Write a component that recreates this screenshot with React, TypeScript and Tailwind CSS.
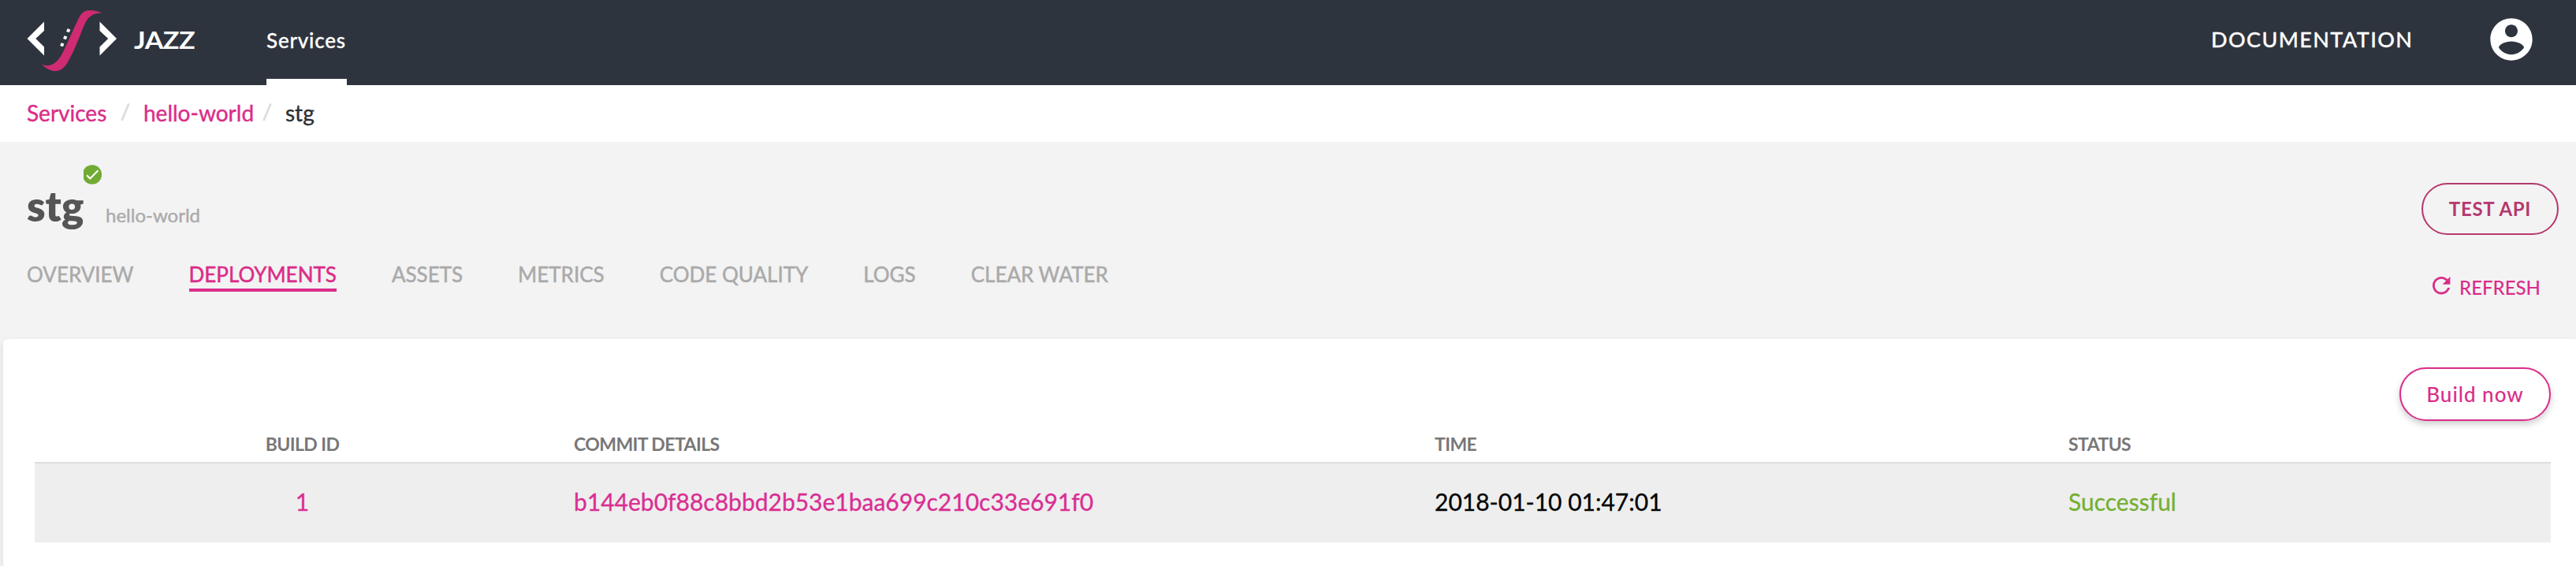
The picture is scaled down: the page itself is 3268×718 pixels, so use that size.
const tabs = ["OVERVIEW", "DEPLOYMENTS", "ASSETS", "METRICS", "CODE QUALITY", "LOGS", "CLEAR WATER"];

const columns = "grid grid-cols-[679px_1092px_804px_1fr]";

function Logo() {
  return (
    <svg className="block h-[84px] w-[116px]" viewBox="0 0 116 84">
      <path d="M22 20.5V32L11.3 42 22 52.5V63.5L.5 42z" fill="#fff" />
      <path d="M92.5 20.5V32L103.200 42 92.500 52.500V63.500L114 42z" fill="#fff" />
      <path
        d="M18.500 74.500C26 78 37 77.500 46 59C52.500 46 58 32 65 18C69.500 7 77 2 95.500 9.500C85 9.500 78.500 13 74 22.500C67 38 62 54 54.500 67C47 83 36 90 18.500 74.500z"
        fill="#cf2a72"
      />
      <path d="M51.500 29.300l3.800 1.300-1.400 3.700-3.800-1.300zM47.500 38.300l3.800 1.300-1.400 3.700-3.800-1.300zM43.600 47.200l3.800 1.300-1.400 3.700-3.800-1.300z" fill="#fff" />
    </svg>
  );
}

function Header() {
  return (
    <header className="flex h-[108px] items-start bg-[#2e343e] text-white">
      <div className="pl-[34px] pt-[7px]">
        <Logo />
      </div>
      <div className="ml-5 mt-[32px] w-[168px] origin-left scale-x-110 text-[31px] font-bold leading-9 tracking-[-0.5px]">JAZZ</div>
      <nav className="flex h-full w-[102px] flex-col border-b-8 border-white pt-[35px] [-webkit-text-stroke:0.3px]">
        <span className="whitespace-nowrap text-[26px] font-medium leading-8 tracking-[0.8px]">Services</span>
      </nav>
      <div className="ml-auto mt-[34px] w-[349px] text-[27px] font-medium leading-8 tracking-[1.4px] [-webkit-text-stroke:0.3px]">DOCUMENTATION</div>
      <svg className="mr-[50px] mt-[18px] size-16" viewBox="0 0 24 24" fill="#fff">
        <path d="M12 2C6.480 2 2 6.480 2 12s4.480 10 10 10 10-4.480 10-10S17.520 2 12 2zm0 3c1.660 0 3 1.340 3 3s-1.340 3-3 3-3-1.340-3-3 1.340-3 3-3zm0 14.200c-2.500 0-4.710-1.280-6-3.220.030-1.990 4-3.080 6-3.080 1.990 0 5.970 1.090 6 3.080-1.290 1.940-3.500 3.220-6 3.220z" />
      </svg>
    </header>
  );
}

function Slash() {
  return (
    <svg className="mt-[23px] h-[23px] w-3 shrink-0" viewBox="0 0 12 23">
      <path d="M10.500 0.500L1.500 22" stroke="#ddd" strokeWidth="2.800" />
    </svg>
  );
}

function Breadcrumbs() {
  return (
    <div className="flex h-[72px] items-start bg-white pl-[34px] text-[28px] leading-[70px] text-[#da2d89] [-webkit-text-stroke:0.4px]">
      <span className="w-[119px]">Services</span>
      <Slash />
      <span className="ml-[17px] w-[151px]">hello-world</span>
      <Slash />
      <span className="ml-[17px] text-[#2c2f33]">stg</span>
    </div>
  );
}

function PageHead() {
  return (
    <section className="flex h-[250px] justify-between bg-[#f3f3f3]">
      <div className="pl-[34px]">
        <div className="flex h-[136px] items-start">
          <h1 className="mt-[45px] w-[72px] text-[53px] font-extrabold leading-[72px] text-[#555]">stg</h1>
          <svg className="mt-[29px] h-[25px] w-[23px]" viewBox="0 0 23 25">
            <circle cx="10.900" cy="12.500" r="12.200" fill="#71ab33" />
            <path d="M4 13.200l4.300 4.300L18.500 7.300" fill="none" stroke="#fff" strokeWidth="2" />
          </svg>
          <span className="ml-[5px] mt-[77px] text-[24px] leading-8 text-[#aaa] [-webkit-text-stroke:0.4px]">hello-world</span>
        </div>
        <nav className="flex gap-[70px] text-[26px] text-[#aaa] [-webkit-text-stroke:0.5px]">
          {tabs.map((t) => (
            <span
              key={t}
              className={
                t === "DEPLOYMENTS"
                  ? "h-[54px] whitespace-nowrap border-b-4 border-[#da2d89] pt-[16px] leading-[32px] text-[#da2d89]"
                  : "h-[54px] whitespace-nowrap pt-[16px] leading-[32px]"
              }
            >
              {t}
            </span>
          ))}
        </nav>
      </div>
      <div className="mr-[22px] mt-[52px] flex flex-col items-end">
        <button className="h-[66px] w-[174px] rounded-full border-2 border-[#b5386e] text-[24px] font-bold tracking-[0.7px] text-[#b5386e]">
          TEST API
        </button>
        <div className="mr-[23px] mt-[50px] flex h-[32px] w-[137px] text-[24px] leading-[34px] text-[#da2d89]">
          <svg className="mt-[3px] h-[23px] w-[35px]" viewBox="4 4 24.300 16" fill="#da2d89" preserveAspectRatio="xMinYMin meet">
            <path d="M17.650 6.350C16.200 4.900 14.210 4 12 4c-4.420 0-7.990 3.580-7.990 8s3.570 8 7.990 8c3.730 0 6.840-2.550 7.730-6h-2.080c-.820 2.330-3.040 4-5.650 4-3.310 0-6-2.690-6-6s2.690-6 6-6c1.660 0 3.140.690 4.220 1.780L13 11h7V4l-2.350 2.350z" />
          </svg>
          <span className="font-medium">REFRESH</span>
        </div>
      </div>
    </section>
  );
}

function Deployments() {
  return (
    <main className="flex h-[288px] bg-[#f3f3f3] pl-1">
      <div className="flex-1 rounded-tl-[6px] bg-white pl-10 pr-8 pt-9 shadow-[0_4px_10px_rgba(0,0,0,0.1)]">
        <div className="flex justify-end">
          <button className="h-[68px] w-[192px] rounded-full border-2 border-[#da2d89] bg-white text-[26px] font-medium tracking-[1px] text-[#da2d89] shadow-[0_4px_8px_rgba(0,0,0,0.2)]">
            Build now
          </button>
        </div>
        <div className={`${columns} h-[54px] border-b-2 border-[#ddd] pt-[12px] text-[23px] font-bold leading-[34px] tracking-[-0.58px] text-[#777]`}>
          <span className="text-center">BUILD ID</span>
          <span className="pl-[5px]">COMMIT DETAILS</span>
          <span className="pl-[5px]">TIME</span>
          <span className="pl-[5px]">STATUS</span>
        </div>
        <div className={`${columns} h-[100px] bg-[#eee] text-[30px] leading-[97px] [-webkit-text-stroke:0.3px]`}>
          <span className="text-center text-[#da2d93]">1</span>
          <span className="pl-[5px] text-[#da2d93]">b144eb0f88c8bbd2b53e1baa699c210c33e691f0</span>
          <span className="pl-[5px] text-black">2018-01-10 01:47:01</span>
          <span className="pl-[5px] text-[#74b033]">Successful</span>
        </div>
      </div>
    </main>
  );
}

export default function App() {
  return (
    <div className="h-[718px] w-[3268px] overflow-hidden bg-white font-['Lato',sans-serif]">
      <Header />
      <Breadcrumbs />
      <PageHead />
      <Deployments />
    </div>
  );
}
